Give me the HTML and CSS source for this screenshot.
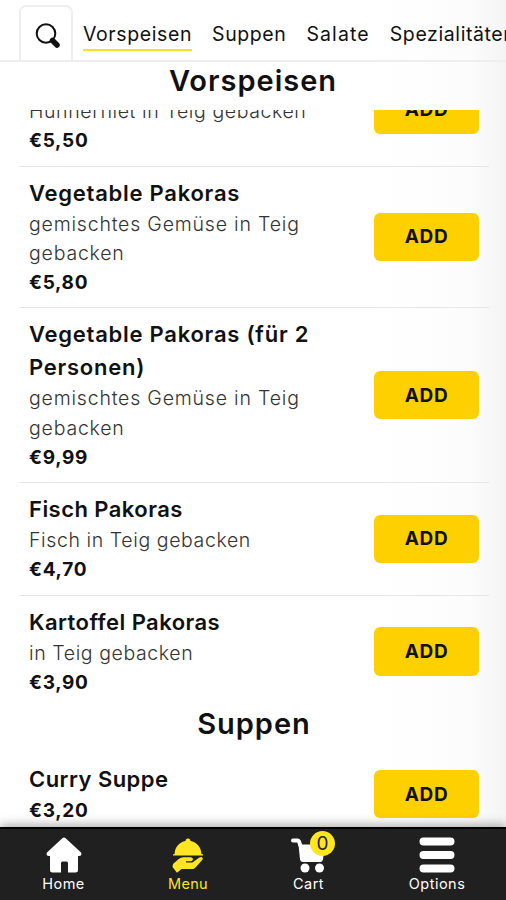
FILE: index.html
```html
<!DOCTYPE html>
<html lang="de">
<head>
<meta charset="utf-8">
<title>Speisekarte</title>
<link rel="stylesheet" href="styles.css">
</head>
<body>
<div class="app">
  <header class="tabs">
    <button class="search" aria-label="Suche">
      <svg width="26" height="26" viewBox="0 0 26 26"><circle cx="11" cy="10.500" r="9.300" fill="none" stroke="#111" stroke-width="2"/><path d="M17.500 17.500L22 22" stroke="#111" stroke-width="5.500" stroke-linecap="round"/></svg>
    </button>
    <nav class="tab-list">
      <a class="tab tab-active">Vorspeisen</a>
      <a class="tab">Suppen</a>
      <a class="tab salate">Salate</a>
      <a class="tab">Spezialitäten</a>
    </nav>
  </header>
  <h2 class="section sticky">Vorspeisen</h2>
  <main class="scroll">
    <div class="list">
      <article class="item tight"><div class="info untitled"><p>Hühnerfilet in Teig gebacken</p><b>€5,50</b></div><button class="add">ADD</button></article>
      <article class="item"><div class="info"><h3>Vegetable Pakoras</h3><p>gemischtes Gemüse in Teig<br>gebacken</p><b>€5,80</b></div><button class="add">ADD</button></article>
      <article class="item"><div class="info"><h3>Vegetable Pakoras (für 2<br>Personen)</h3><p>gemischtes Gemüse in Teig<br>gebacken</p><b>€9,99</b></div><button class="add">ADD</button></article>
      <article class="item tight"><div class="info"><h3>Fisch Pakoras</h3><p>Fisch in Teig gebacken</p><b>€4,70</b></div><button class="add">ADD</button></article>
      <article class="item tight last"><div class="info"><h3>Kartoffel Pakoras</h3><p>in Teig gebacken</p><b>€3,90</b></div><button class="add">ADD</button></article>
      <h2 class="section">Suppen</h2>
      <article class="item tight last"><div class="info"><h3>Curry Suppe</h3><b>€3,20</b></div><button class="add">ADD</button></article>
    </div>
  </main>
  <footer class="bar">
    <a class="nav home">
      <svg width="36" height="36" viewBox="0 0 36 36"><path d="M16.300 1.200q1.700-1.500 3.400 0L35 15.500q1.500 3-1.800 3.500H32v14q0 2.500-2.500 2.500H22V26q0-1.500-1.500-1.500h-4Q15 24.500 15 26v9.500H6.500Q4 35.500 4 33V19H2.800Q-.5 18.500 1 15.500z" fill="currentColor"/></svg>
      <span>Home</span>
    </a>
    <a class="nav menu">
      <svg width="32" height="36" viewBox="0 0 32 36"><path d="M1 18.500v-1.200h1.500C3 9.500 7.500 5.200 13.500 4a2.500 2.500 0 1 1 5 0C24.500 5.200 29 9.500 29.500 17.300H31v1.200zM1 27l6-5.300q2-1.500 4.500-1.500h7.500q2 .3 2 2t-2 2h-5v1.200h6.500l6.500-4.600q2-1.200 3.300-.4t-.3 2.900l-6.500 7.200Q22 32 20 32H9.500l-4.500 3.700L.5 30z" fill="currentColor"/></svg>
      <span>Menu</span>
    </a>
    <a class="nav cart">
      <svg width="36" height="36" viewBox="0 0 36 36"><path d="M2 3.500h4q2 .2 2.500 2.200l.8 2.800" fill="none" stroke="#fff" stroke-width="4" stroke-linecap="round"/><path d="M7.500 7.500H34l-2 15q-.5 2.500-3 2.500H12q-2.500 0-3-2.500z" fill="#fff"/><circle cx="14" cy="31" r="4.500" fill="#fff"/><circle cx="28.500" cy="31" r="4.500" fill="#fff"/></svg>
      <span>Cart</span>
      <em class="badge">0</em>
    </a>
    <a class="nav options">
      <svg width="36" height="36" viewBox="0 0 36 36"><path d="M4.500 4.500h27M4.500 18h27M4.500 31.500h27" stroke="#fff" stroke-width="8" stroke-linecap="round"/></svg>
      <span>Options</span>
    </a>
  </footer>
</div>
</body>
</html>
```
FILE: styles.css
```css
* { box-sizing: border-box; }
body { margin: 0; background: #fff; font-family: Inter, "Open Sans", sans-serif; color: #111; }
h2, h3, p { margin: 0; }
button { font: inherit; color: inherit; padding: 0; border: 0; }
.app { width: 506px; height: 900px; display: flex; flex-direction: column; overflow: hidden; background: linear-gradient(90deg, #fff 380px, #fcfcfc 470px, #f4f4f4 506px); }
.tabs { height: 62px; flex: none; display: flex; align-items: flex-end; padding-left: 19px; border-bottom: 2px solid #eee; }
.search { width: 54px; height: 55px; flex: none; background: #fff; border: 2px solid #eee; border-bottom: 0; border-radius: 7px 7px 0 0; display: flex; align-items: center; justify-content: center; padding: 5px 0 0 3px; }
.tab-list { display: flex; height: 60px; padding: 17px 0 0 10px; white-space: nowrap; }
.tab { height: 34px; line-height: 34px; font-size: 19.5px; margin-right: 20px; letter-spacing: .6px; flex: none; }
.tab-active { border-bottom: 2px solid #fddf1d; }
.salate { letter-spacing: 1.1px; }
.section { font-size: 29px; font-weight: 600; letter-spacing: 1px; text-align: center; height: 46px; line-height: 34px; }
.sticky { height: 48px; line-height: 38px; flex: none; }
.scroll { flex: 1; min-height: 0; overflow: hidden; }
.list { margin: -56px 17px 0 19px; }
.item { display: flex; align-items: center; justify-content: space-between; padding: 10px; border-bottom: 1px solid #e6e6e6; }
.item.last { border-bottom: 0; }
.item h3 { font-size: 22px; font-weight: 600; line-height: 33px; letter-spacing: .75px; }
.item p { font-size: 19.5px; font-weight: 300; line-height: 29.25px; letter-spacing: .8px; color: #333; }
.item b { display: block; font-size: 19px; font-weight: 700; line-height: 29.25px; letter-spacing: .7px; }
.item.tight h3 { letter-spacing: .45px; }
.item.tight p { letter-spacing: .6px; }
.info { white-space: nowrap; }
.untitled { padding-top: 33px; }
.add { width: 105px; height: 48.5px; flex: none; border-radius: 6px; background: #ffd000; font-size: 19px; font-weight: 700; letter-spacing: .6px; }
.bar { height: 73px; flex: none; position: relative; display: flex; background: #202020; border-top: 2px solid #000; box-shadow: 0 -2px 10px rgba(0,0,0,.35); color: #fff; }
.nav { position: relative; display: flex; flex-direction: column; align-items: center; padding-top: 8px; font-size: 14.5px; letter-spacing: .5px; }
.nav span { line-height: 22px; }
.home { width: 127px; }
.menu { width: 122px; color: #ffe620; letter-spacing: .3px; }
.cart { width: 119px; }
.options { width: 138px; }
.badge { position: absolute; left: 61px; top: 2px; width: 25px; height: 25px; border-radius: 50%; background: #ffe620; color: #222; font-style: normal; font-size: 19px; letter-spacing: 0; line-height: 25px; text-align: center; }
```
